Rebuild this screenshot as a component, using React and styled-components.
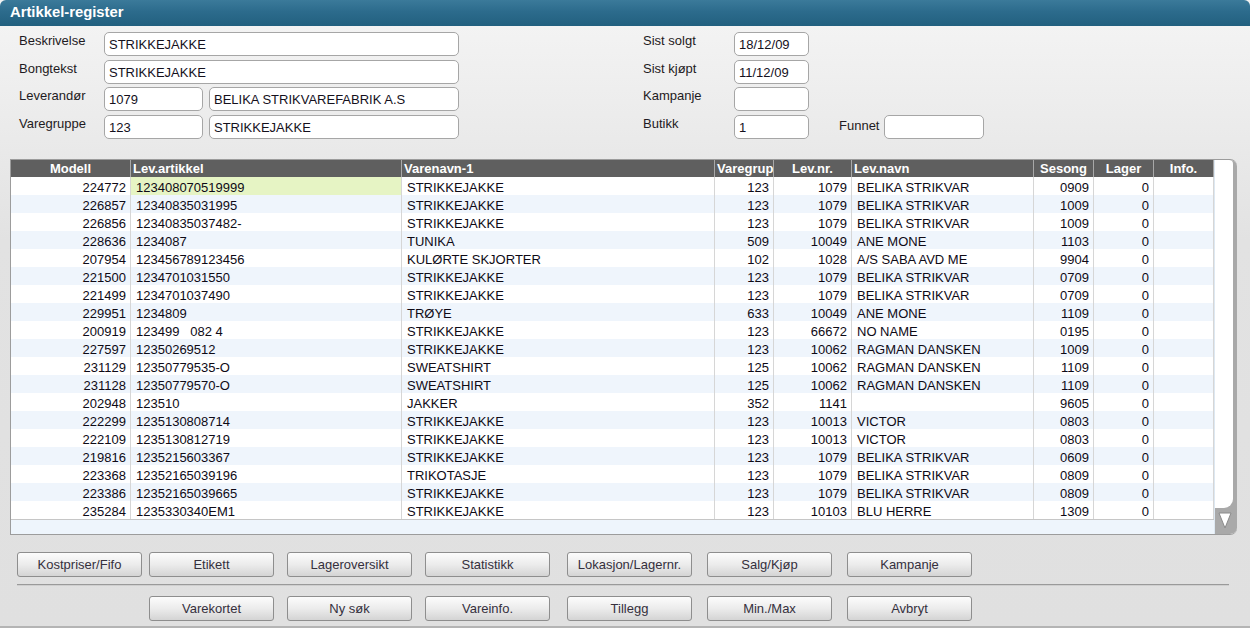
import React from "react";
import styled, { createGlobalStyle } from "styled-components";

const GlobalStyle = createGlobalStyle`
  html, body {
    margin: 0;
    padding: 0;
  }
  body {
    font-family: "Liberation Sans", Arial, sans-serif;
    font-size: 13px;
    background: #e0e0e0;
    color: #111;
  }
`;

const columns = [
  { title: "Modell", width: 120, head: "center", align: "right" },
  { title: "Lev.artikkel", width: 271, head: "left", align: "left" },
  { title: "Varenavn-1", width: 313, head: "left", align: "left" },
  { title: "Varegrup", width: 59, head: "left", align: "right" },
  { title: "Lev.nr.", width: 78, head: "center", align: "right" },
  { title: "Lev.navn", width: 182, head: "left", align: "left" },
  { title: "Sesong", width: 60, head: "center", align: "right" },
  { title: "Lager", width: 60, head: "center", align: "right" },
  { title: "Info.", width: 60, head: "center", align: "left" },
];

const template = columns.map((c) => `${c.width}px`).join(" ");

const rows = [
  ["224772", "123408070519999", "STRIKKEJAKKE", "123", "1079", "BELIKA STRIKVAR", "0909", "0", ""],
  ["226857", "12340835031995", "STRIKKEJAKKE", "123", "1079", "BELIKA STRIKVAR", "1009", "0", ""],
  ["226856", "12340835037482-", "STRIKKEJAKKE", "123", "1079", "BELIKA STRIKVAR", "1009", "0", ""],
  ["228636", "1234087", "TUNIKA", "509", "10049", "ANE MONE", "1103", "0", ""],
  ["207954", "123456789123456", "KULØRTE SKJORTER", "102", "1028", "A/S SABA AVD ME", "9904", "0", ""],
  ["221500", "1234701031550", "STRIKKEJAKKE", "123", "1079", "BELIKA STRIKVAR", "0709", "0", ""],
  ["221499", "1234701037490", "STRIKKEJAKKE", "123", "1079", "BELIKA STRIKVAR", "0709", "0", ""],
  ["229951", "1234809", "TRØYE", "633", "10049", "ANE MONE", "1109", "0", ""],
  ["200919", "123499   082 4", "STRIKKEJAKKE", "123", "66672", "NO NAME", "0195", "0", ""],
  ["227597", "12350269512", "STRIKKEJAKKE", "123", "10062", "RAGMAN DANSKEN", "1009", "0", ""],
  ["231129", "12350779535-O", "SWEATSHIRT", "125", "10062", "RAGMAN DANSKEN", "1109", "0", ""],
  ["231128", "12350779570-O", "SWEATSHIRT", "125", "10062", "RAGMAN DANSKEN", "1109", "0", ""],
  ["202948", "123510", "JAKKER", "352", "1141", "", "9605", "0", ""],
  ["222299", "1235130808714", "STRIKKEJAKKE", "123", "10013", "VICTOR", "0803", "0", ""],
  ["222109", "1235130812719", "STRIKKEJAKKE", "123", "10013", "VICTOR", "0803", "0", ""],
  ["219816", "1235215603367", "STRIKKEJAKKE", "123", "1079", "BELIKA STRIKVAR", "0609", "0", ""],
  ["223368", "12352165039196", "TRIKOTASJE", "123", "1079", "BELIKA STRIKVAR", "0809", "0", ""],
  ["223386", "12352165039665", "STRIKKEJAKKE", "123", "1079", "BELIKA STRIKVAR", "0809", "0", ""],
  ["235284", "1235330340EM1", "STRIKKEJAKKE", "123", "10103", "BLU HERRE", "1309", "0", ""],
];

const topButtons = [
  "Kostpriser/Fifo",
  "Etikett",
  "Lageroversikt",
  "Statistikk",
  "Lokasjon/Lagernr.",
  "Salg/Kjøp",
  "Kampanje",
];

const bottomButtons = ["Varekortet", "Ny søk", "Vareinfo.", "Tillegg", "Min./Max", "Avbryt"];

export default function App() {
  return (
    <Page>
      <GlobalStyle />
      <TitleBar>Artikkel-register</TitleBar>
      <Body>
        <FormArea>
          <LeftForm>
            <Label>Beskrivelse</Label>
            <Input defaultValue="STRIKKEJAKKE" />
            <Label>Bongtekst</Label>
            <Input defaultValue="STRIKKEJAKKE" />
            <Label>Leverandør</Label>
            <Pair>
              <Input $w={99} defaultValue="1079" />
              <Input $w={250} defaultValue="BELIKA STRIKVAREFABRIK A.S" />
            </Pair>
            <Label>Varegruppe</Label>
            <Pair>
              <Input $w={99} defaultValue="123" />
              <Input $w={250} defaultValue="STRIKKEJAKKE" />
            </Pair>
          </LeftForm>
          <RightForm>
            <Label>Sist solgt</Label>
            <Input $w={75} defaultValue="18/12/09" />
            <Label>Sist kjøpt</Label>
            <Input $w={75} defaultValue="11/12/09" />
            <Label>Kampanje</Label>
            <Input $w={75} defaultValue="" />
            <Label>Butikk</Label>
            <Pair>
              <Input $w={75} defaultValue="1" />
              <FunnetLabel>Funnet</FunnetLabel>
              <Input $w={100} defaultValue="" />
            </Pair>
          </RightForm>
        </FormArea>

        <Frame>
          <Grid>
            <HeadRow>
              {columns.map((c) => (
                <HeadCell key={c.title} $align={c.head}>
                  {c.title}
                </HeadCell>
              ))}
            </HeadRow>
            {rows.map((r, i) => (
              <Row key={r[0]} $alt={i % 2 === 1}>
                {r.map((v, j) => (
                  <Cell
                    key={j}
                    $align={columns[j].align}
                    $selected={i === 0 && j === 1}
                  >
                    {v}
                  </Cell>
                ))}
              </Row>
            ))}
            <Strip />
          </Grid>
          <Scroll>
            <Track />
            <ArrowBox>
              <svg width="14" height="17" viewBox="0 0 14 17">
                <polygon
                  points="1,1 13,1 7,16"
                  fill="#ffffff"
                  stroke="#8a8a8a"
                  strokeWidth="1"
                />
              </svg>
            </ArrowBox>
          </Scroll>
        </Frame>

        <ButtonRow $gap={17}>
          {topButtons.map((b) => (
            <Button key={b}>{b}</Button>
          ))}
        </ButtonRow>
        <Separator />
        <ButtonRow $gap={10}>
          {bottomButtons.map((b, i) => (
            <Button key={b} $start={i === 0 ? 2 : undefined}>
              {b}
            </Button>
          ))}
        </ButtonRow>
      </Body>
    </Page>
  );
}

const Page = styled.div`
  width: 1250px;
  height: 628px;
  display: flex;
  flex-direction: column;
  overflow: hidden;
  box-sizing: border-box;
  border-bottom: 2px solid #b4b4b4;
  background: linear-gradient(to bottom, #f3f3f3 26px, #e2e2e2 240px, #e0e0e0);
`;

const TitleBar = styled.div`
  height: 26px;
  line-height: 25px;
  padding-left: 10px;
  color: #ffffff;
  font-weight: bold;
  font-size: 14.8px;
  border-radius: 6px 6px 0 0;
  background: linear-gradient(to bottom, #3b7a9a 0%, #2c6b8c 45%, #22607f 100%);
  flex-shrink: 0;
`;

const Body = styled.div`
  flex: 1;
  display: flex;
  flex-direction: column;
`;

const FormArea = styled.div`
  display: flex;
  padding: 6px 0 0 19px;
`;

const LeftForm = styled.div`
  display: grid;
  grid-template-columns: 85px 355px;
  grid-auto-rows: 24px;
  row-gap: 3.67px;
`;

const RightForm = styled.div`
  display: grid;
  grid-template-columns: 91px auto;
  grid-auto-rows: 24px;
  row-gap: 3.67px;
  margin-left: 184px;
`;

const Label = styled.div`
  font-size: 13px;
  line-height: 16px;
  color: #1e1a22;
  padding-top: 1px;
`;

const FunnetLabel = styled.span`
  margin-left: 30px;
  margin-right: 5px;
  line-height: 22px;
  color: #1e1a22;
`;

const Pair = styled.div`
  display: flex;
  gap: 6px;
  align-items: flex-start;

  & > ${FunnetLabel} {
    margin-left: 24px;
    margin-right: -1px;
  }
`;

const Input = styled.input`
  box-sizing: border-box;
  width: ${(p) => (p.$w ? `${p.$w}px` : "100%")};
  height: 24px;
  margin: 0;
  padding: 1px 4px 0;
  border: 1px solid #a6a6a6;
  border-radius: 5px;
  background: #ffffff;
  font-family: "Liberation Sans", Arial, sans-serif;
  font-size: 13px;
  color: #14101c;
  outline: none;
`;

const Frame = styled.div`
  display: flex;
  align-self: flex-start;
  margin: 20px 0 0 10px;
  border: 1px solid #9c9c9c;
  border-right: none;
  border-radius: 0 7px 7px 0;
  overflow: hidden;
  background: #ffffff;
`;

const Grid = styled.div`
  display: flex;
  flex-direction: column;
  width: 1203px;
`;

const HeadRow = styled.div`
  display: grid;
  grid-template-columns: ${template};
  height: 17px;
  background: #5f5f5f;
`;

const HeadCell = styled.div`
  box-sizing: border-box;
  border-right: 1px solid #a8a8a8;
  color: #ffffff;
  font-weight: bold;
  font-size: 13px;
  line-height: 17px;
  padding: 0 2px;
  text-align: ${(p) => p.$align};
  white-space: nowrap;
  overflow: hidden;
`;

const Row = styled.div`
  display: grid;
  grid-template-columns: ${template};
  height: 18px;
  background: ${(p) => (p.$alt ? "#eff5fc" : "#ffffff")};
`;

const Cell = styled.div`
  box-sizing: border-box;
  height: 18px;
  border-right: 1px solid #d6d6d6;
  line-height: 18px;
  font-size: 13px;
  color: #0e0a16;
  padding: 2px 4px 0 5px;
  text-align: ${(p) => p.$align};
  white-space: pre;
  overflow: hidden;
  background: ${(p) => (p.$selected ? "#e6f4c4" : "transparent")};
`;

const Strip = styled.div`
  height: 14px;
  border-top: 1px solid #c6c6c6;
  background: #eef5fc;
`;

const Scroll = styled.div`
  width: 23px;
  box-sizing: border-box;
  padding-right: 4px;
  display: flex;
  flex-direction: column;
  background: #a9a9a9;
  border-left: 1px solid #dde8f2;
`;

const Track = styled.div`
  flex: 1;
  background: #ffffff;
  border-radius: 0 4px 9px 0;
`;

const ArrowBox = styled.div`
  height: 26px;
  display: flex;
  align-items: center;
  justify-content: center;
  padding-left: 2px;
`;

const ButtonRow = styled.div`
  display: grid;
  grid-template-columns: 132px 138px 138px 142px 140px 140px 125px;
  margin: ${(p) => p.$gap}px 0 0 17px;
`;

const Button = styled.button`
  box-sizing: border-box;
  width: 125px;
  height: 25px;
  padding: 0;
  grid-column-start: ${(p) => p.$start || "auto"};
  font-family: "Liberation Sans", Arial, sans-serif;
  font-size: 13px;
  color: #35303d;
  border: 1px solid #8e8e8e;
  border-radius: 3px;
  background: linear-gradient(to bottom, #fcfcfc 0%, #ececec 50%, #d4d4d4 100%);
  cursor: pointer;
`;

const Separator = styled.div`
  margin: 7px 0 0 17px;
  width: 1212px;
  height: 0;
  border-top: 1px solid #9a9a9a;
  border-bottom: 1px solid #cfcfcf;
`;
